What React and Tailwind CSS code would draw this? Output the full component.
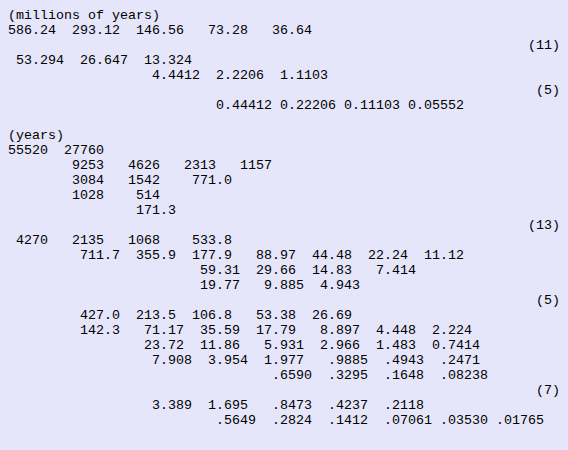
// Geological time table, laid out as fixed-width text columns
const rows = [
  [[0, "(millions of years)"]],
  [[0, "586.24"], [8, "293.12"], [16, "146.56"], [25, "73.28"], [33, "36.64"]],
  [[65, "(11)"]],
  [[1, "53.294"], [9, "26.647"], [17, "13.324"]],
  [[18, "4.4412"], [26, "2.2206"], [34, "1.1103"]],
  [[66, "(5)"]],
  [[26, "0.44412"], [34, "0.22206"], [42, "0.11103"], [50, "0.05552"]],
  [],
  [[0, "(years)"]],
  [[0, "55520"], [7, "27760"]],
  [[8, "9253"], [15, "4626"], [22, "2313"], [29, "1157"]],
  [[8, "3084"], [15, "1542"], [23, "771.0"]],
  [[8, "1028"], [16, "514"]],
  [[16, "171.3"]],
  [[65, "(13)"]],
  [[1, "4270"], [8, "2135"], [15, "1068"], [23, "533.8"]],
  [[9, "711.7"], [16, "355.9"], [23, "177.9"], [31, "88.97"], [38, "44.48"], [45, "22.24"], [52, "11.12"]],
  [[24, "59.31"], [31, "29.66"], [38, "14.83"], [46, "7.414"]],
  [[24, "19.77"], [32, "9.885"], [39, "4.943"]],
  [[66, "(5)"]],
  [[9, "427.0"], [16, "213.5"], [23, "106.8"], [31, "53.38"], [38, "26.69"]],
  [[9, "142.3"], [17, "71.17"], [24, "35.59"], [31, "17.79"], [39, "8.897"], [46, "4.448"], [53, "2.224"]],
  [[17, "23.72"], [24, "11.86"], [32, "5.931"], [39, "2.966"], [46, "1.483"], [53, "0.7414"]],
  [[18, "7.908"], [25, "3.954"], [32, "1.977"], [40, ".9885"], [47, ".4943"], [54, ".2471"]],
  [[33, ".6590"], [40, ".3295"], [47, ".1648"], [54, ".08238"]],
  [[66, "(7)"]],
  [[18, "3.389"], [25, "1.695"], [33, ".8473"], [40, ".4237"], [47, ".2118"]],
  [[26, ".5649"], [33, ".2824"], [40, ".1412"], [47, ".07061"], [54, ".03530"], [61, ".01765"]],
];

const toLine = (cells) => {
  let line = "";
  for (const [col, text] of cells) {
    line = line.padEnd(col, " ") + text;
  }
  return line;
};

function App() {
  const text = rows.map(toLine).join("\n");

  return (
    <div className="bg-[#e6e6fa] min-h-screen w-screen overflow-hidden">
      <pre className="m-0 pt-2 pl-2 text-black text-[13.3333px] leading-[15px] font-['Liberation_Mono','Courier_New',monospace]">
        {text}
      </pre>
    </div>
  );
}

export default App;
